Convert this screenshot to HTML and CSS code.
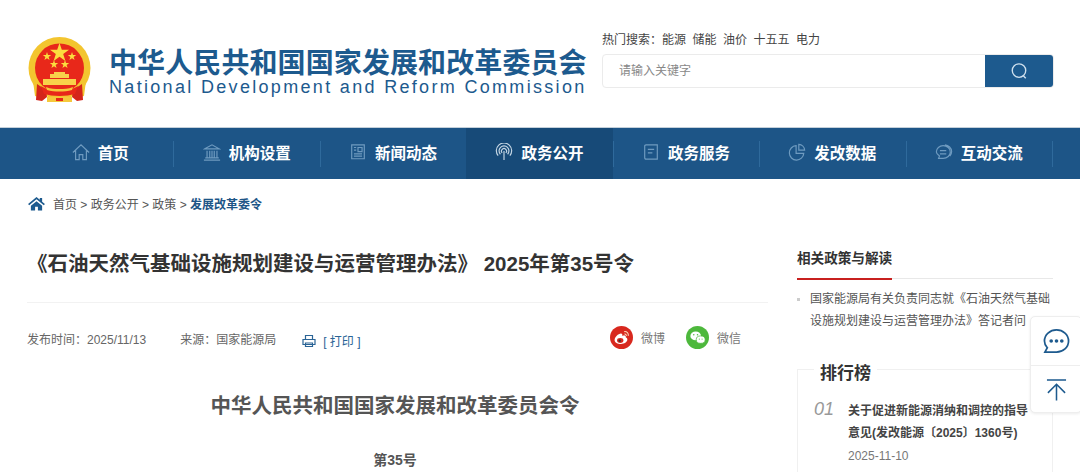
FILE: index.html
```html
<!DOCTYPE html>
<html lang="zh-CN">
<head>
    <meta charset="UTF-8">
    <title>石油天然气基础设施规划建设与运营管理办法</title>
    <link rel="stylesheet" href="styles.css">
</head>
<body>
    <header class="top">
        <div class="logo">
            <svg class="emblem" viewBox="0 0 64 68" width="64" height="68">
                <circle cx="32.500" cy="31" r="31" fill="#f3c52f"/>
                <path d="M6 44c5 10 15 15 26.500 15S54 54 59 44l-2 15-8 2-4-3H20l-4 3-8-2z" fill="#f3c52f"/>
                <circle cx="32.500" cy="31" r="24.500" fill="#e8281a"/>
                <polygon points="32.500,6 34.800,12.800 42,12.800 36.200,17 38.400,24 32.500,19.700 26.600,24 28.800,17 23,12.800 30.200,12.800" fill="#fbdc3e"/>
                <polygon points="20,15 21,18 24.200,18 21.600,20 22.600,23 20,21.200 17.400,23 18.400,20 15.800,18 19,18" fill="#fbdc3e"/>
                <polygon points="45,15 46,18 49.200,18 46.600,20 47.600,23 45,21.200 42.400,23 43.400,20 40.800,18 44,18" fill="#fbdc3e"/>
                <polygon points="27,23 28,26 31.200,26 28.600,28 29.600,31 27,29.200 24.400,31 25.400,28 22.800,26 26,26" fill="#fbdc3e"/>
                <polygon points="38,23 39,26 42.200,26 39.600,28 40.600,31 38,29.200 35.400,31 36.400,28 33.800,26 37,26" fill="#fbdc3e"/>
                <path d="M27 35h11v2H27zM23 37h19v4H23zM16 42h33v6H16z" fill="#f8d24a"/>
                <path d="M10 47l9 6 1 7-5 4-6-1zM55 47l-9 6-1 7 5 4 6-1z" fill="#d4251b"/>
                <path d="M14 49c6 4 11 4 18.500 4S45 53 51 49l-3 8c-5 1-9 2-15.500 2S22 58 17 57z" fill="#e8281a"/>
                <path d="M19 50c5 2 9 2 13.500 2s8.500 0 13.500-2l-1 3c-4 1-8 1.500-12.500 1.500S24 54 20 53zM20 60h25v5H20z" fill="#f5c93c"/>
                <path d="M29 61h7v3h-7z" fill="#e8281a"/>
            </svg>
            <div class="logo-text">
                <div class="logo-cn">中华人民共和国国家发展和改革委员会</div>
                <div class="logo-en">National Development and Reform Commission</div>
            </div>
        </div>
        <div class="search">
            <div class="hot">
                <span>热门搜索：</span><span class="hot-item">能源</span><span class="hot-item">储能</span><span class="hot-item">油价</span><span class="hot-item">十五五</span><span class="hot-item">电力</span>
            </div>
            <div class="search-box">
                <div class="search-input">请输入关键字</div>
                <div class="search-btn">
                    <svg viewBox="0 0 20 20" width="18" height="18" fill="none" stroke="#cfe0ee" stroke-width="1.500"><circle cx="10" cy="9.500" r="7.500"/><path d="M14.500 15l3 3"/></svg>
                </div>
            </div>
        </div>
    </header>

    <nav class="nav">
        <div class="nav-item">
            <svg class="nav-icon" viewBox="0 0 20 20"><path d="M1 10.500L10 2l9 8.500M4 8v10.500h4V13h4v5.500h4V8"/></svg>
            <span>首页</span>
        </div>
        <div class="nav-item">
            <svg class="nav-icon" viewBox="0 0 20 20"><path d="M2 6.500L10 2l8 4.500zM4.500 8.500v7.500M7.500 8.500v7.500M10 8.500v7.500M12.500 8.500v7.500M15.500 8.500v7.500M2.500 16.500h15M1 19h18"/></svg>
            <span>机构设置</span>
        </div>
        <div class="nav-item">
            <svg class="nav-icon" viewBox="0 0 20 20"><path d="M3 2h14v15.500H3zM10 5h4.500v4.500H10zM5.500 5H8M5.500 8H8M5.500 12h9M5.500 14.500h9"/></svg>
            <span>新闻动态</span>
        </div>
        <div class="nav-item active">
            <svg class="nav-icon light" viewBox="0 0 20 20"><path d="M3.500 14a8.500 8.500 0 1 1 13 0M6 12.500a5.500 5.500 0 1 1 8 0M8 11a2.800 2.800 0 1 1 4 0M10 9v10"/></svg>
            <span>政务公开</span>
        </div>
        <div class="nav-item">
            <svg class="nav-icon" viewBox="0 0 20 20"><path d="M4.500 2h12.500v16H4.500C3.500 18 3 17.500 3 16.500V3.500C3 2.500 3.500 2 4.500 2zM6.500 7h7M6.500 11h5"/></svg>
            <span>政务服务</span>
        </div>
        <div class="nav-item">
            <svg class="nav-icon" viewBox="0 0 20 20"><path d="M9 3a8 8 0 1 0 8.500 8.500H9zM12 1.500V8h6.500A7 7 0 0 0 12 1.500z"/></svg>
            <span>发改数据</span>
        </div>
        <div class="nav-item">
            <svg class="nav-icon" viewBox="0 0 20 20"><path d="M9 3c4.500 0 8 3 8 7s-3.500 7-8 7H4l1-2.500C3 13 1.500 11.500 1.500 10 1.500 6 5 3 9 3zM11 2c4 .5 7.500 3.500 7.500 7.500 0 2-.8 3.500-2 5M5.500 8.500h7M5.500 12h7"/></svg>
            <span>互动交流</span>
        </div>
    </nav>

    <div class="crumb">
        <svg viewBox="0 0 18 16" width="17" height="15"><path d="M9 1L0 8.500l1.200 1.300L9 3.500l7.800 6.300L18 8.500l-3-2.500V2h-2.500v2zM3 10.500V15.500h4.500v-4h3v4H15v-5L9 5.500z" fill="#1d5a8e"/></svg>
        <span class="crumb-links">首页 &gt; 政务公开 &gt; 政策 &gt; <b>发展改革委令</b></span>
    </div>

    <div class="page">
        <main class="article">
            <h1>《石油天然气基础设施规划建设与运营管理办法》 2025年第35号令</h1>
            <div class="meta">
                <span class="meta-date">发布时间：2025/11/13</span>
                <span class="meta-src">来源：国家能源局</span>
                <svg class="print-icon" viewBox="0 0 14 14" width="14" height="14" fill="none" stroke="#2a6496" stroke-width="1.200"><path d="M3.500 5V1.500h7V5M1 5.500h12v5H1zM3.500 9h7v3.500h-7z"/></svg>
                <span class="print">[ 打印 ]</span>
                <div class="share">
                    <span class="share-dot weibo">
                        <svg viewBox="0 0 16 16" width="17" height="17"><path d="M1.500 10.500c0-3 3.500-6 6-6.200 1.300 0 1.500 1 1.200 2.200 2-.8 3.600-.4 3.400 1.400 1 .4 1.400 1 1.400 1.900 0 2.300-3 4.200-6 4.200s-6-1.300-6-3.500z" fill="#fff"/><ellipse cx="6.800" cy="10.800" rx="3" ry="2.300" fill="#d8281e"/><circle cx="6.300" cy="11" r="1.100" fill="#333"/><path d="M10.500 2.500c2.500-.4 4.500 1.500 3.800 4M10.800 4.800c1.200-.2 2 .7 1.700 1.800" fill="none" stroke="#fbd9b8" stroke-width="1"/></svg>
                    </span>
                    <span>微博</span>
                    <span class="share-dot wechat">
                        <svg viewBox="0 0 16 16" width="17" height="17"><ellipse cx="6.300" cy="6.500" rx="5" ry="4.200" fill="#fff"/><ellipse cx="11" cy="10" rx="4.200" ry="3.500" fill="#fff" stroke="#4db83c" stroke-width=".7"/><circle cx="4.500" cy="5.500" r=".7" fill="#4db83c"/><circle cx="8" cy="5.500" r=".7" fill="#4db83c"/><circle cx="9.700" cy="9.500" r=".5" fill="#4db83c"/><circle cx="12.300" cy="9.500" r=".5" fill="#4db83c"/></svg>
                    </span>
                    <span>微信</span>
                </div>
            </div>
            <h2>中华人民共和国国家发展和改革委员会令</h2>
            <p class="order-no">第35号</p>
        </main>

        <aside class="side">
            <div class="side-head"><span>相关政策与解读</span></div>
            <div class="side-link">国家能源局有关负责同志就《石油天然气基础设施规划建设与运营管理办法》答记者问</div>
            <div class="rank">
                <div class="rank-title">排行榜</div>
                <div class="rank-row">
                    <span class="rank-no">01</span>
                    <div>
                        <div class="rank-name">关于促进新能源消纳和调控的指导意见(发改能源〔2025〕1360号)</div>
                        <div class="rank-date">2025-11-10</div>
                    </div>
                </div>
            </div>
        </aside>
    </div>

    <div class="float-tool">
        <div class="tool-btn">
            <svg viewBox="0 0 28 28" width="27" height="27" fill="none" stroke="#1d5a8e" stroke-width="1.800"><path d="M14 2c6.800 0 12.500 5 12.500 11.500S20.800 25 14 25H2l2.500-4.500C2.500 18.500 1.500 16 1.500 13.500 1.500 7 7.200 2 14 2z"/><circle cx="8.500" cy="13.500" r="1" fill="#1d5a8e"/><circle cx="14" cy="13.500" r="1" fill="#1d5a8e"/><circle cx="19.500" cy="13.500" r="1" fill="#1d5a8e"/></svg>
        </div>
        <div class="tool-btn">
            <svg viewBox="0 0 22 24" width="21" height="24" fill="none" stroke="#1d5a8e" stroke-width="1.600"><path d="M1 1.500h20M11 23V7M2 15l9-9 9 9"/></svg>
        </div>
    </div>
</body>
</html>
```

FILE: styles.css
```css
html, body {
    margin: 0;
    padding: 0;
    height: 472px;
    overflow: hidden;
    background: #fff;
    font-family: "Liberation Sans", "Noto Sans CJK SC", sans-serif;
    color: #333;
}

.top {
    height: 127px;
    padding: 0 27px;
    display: flex;
    justify-content: space-between;
    border-bottom: 1px solid #c4d0da;
    box-sizing: content-box;
}

.logo {
    display: flex;
    align-items: flex-start;
    padding-top: 37px;
}

.emblem {
    flex: none;
}

.logo-text {
    margin-left: 18px;
    margin-top: 12px;
    color: #1d5a8e;
}

.logo-cn {
    font-size: 28px;
    line-height: 29px;
    font-weight: bold;
    letter-spacing: 0.100px;
    white-space: nowrap;
}

.logo-en {
    font-size: 18px;
    line-height: 19px;
    letter-spacing: 2.320px;
    white-space: nowrap;
}

.search {
    width: 452px;
    padding-top: 32px;
    margin-right: -1px;
}

.hot {
    font-size: 12px;
    line-height: 17px;
    color: #444;
}

.hot-item {
    margin-right: 6.500px;
}

.search-box {
    margin-top: 5px;
    height: 34px;
    box-sizing: border-box;
    display: flex;
    border: 1px solid #ebebeb;
    border-radius: 4px;
    overflow: hidden;
}

.search-input {
    flex: 1;
    padding-left: 16px;
    font-size: 12px;
    line-height: 33px;
    color: #888;
}

.search-btn {
    width: 68px;
    background: #1d5a8e;
    display: flex;
    align-items: center;
    justify-content: center;
}

.nav {
    height: 51px;
    padding: 0 27px;
    background: #1d5587;
    display: grid;
    grid-template-columns: repeat(7, 146.43px);
}

.nav-item {
    display: flex;
    align-items: center;
    justify-content: center;
    gap: 8px;
    padding-bottom: 3px;
    font-size: 15.500px;
    font-weight: bold;
    color: #fff;
    position: relative;
}

.nav-item::after {
    content: "";
    position: absolute;
    right: -1px;
    top: 13px;
    height: 26px;
    width: 1px;
    background: #2f6a9c;
}

.nav-item.active {
    background: #174a78;
}

.nav-icon {
    width: 18px;
    height: 18px;
    fill: none;
    stroke: #6f9bc0;
    stroke-width: 1.300;
}

.nav-icon.light {
    stroke: #c5d6e4;
}

.crumb {
    height: 50px;
    padding-left: 28px;
    padding-bottom: 2px;
    box-sizing: border-box;
    display: flex;
    align-items: center;
    gap: 8px;
    font-size: 12px;
    color: #555;
}

.crumb b {
    color: #1d5587;
}

.page {
    display: flex;
    padding-left: 27px;
}

.article {
    width: 741px;
    flex: none;
}

h1 {
    margin: 20px 0 0;
    padding-bottom: 23px;
    font-size: 20.500px;
    line-height: 30px;
    font-weight: bold;
    color: #333;
    border-bottom: 1px solid #f2f2f2;
    white-space: nowrap;
}

.meta {
    display: flex;
    align-items: center;
    height: 36px;
    margin-top: 17px;
    font-size: 12px;
    color: #666;
}

.meta-src {
    margin-left: 34px;
}

.print-icon {
    margin-left: 26px;
    margin-top: 6px;
}

.print {
    margin-left: 7px;
    margin-top: 4px;
    color: #2a6496;
}

.share {
    margin-left: auto;
    margin-right: 27px;
    margin-top: -2px;
    display: flex;
    align-items: center;
    color: #777;
}

.share-dot {
    width: 23px;
    height: 23px;
    border-radius: 50%;
    display: flex;
    align-items: center;
    justify-content: center;
    margin-right: 8px;
}

.share-dot.weibo {
    background: #d8281e;
}

.share-dot.wechat {
    background: #4db83c;
    margin-left: 21px;
}

h2 {
    margin: 35px 0 0;
    padding-right: 5px;
    text-align: center;
    font-size: 20.500px;
    line-height: 30px;
    font-weight: bold;
    color: #555;
}

.order-no {
    margin: 29px 0 0;
    padding-right: 5px;
    text-align: center;
    font-size: 14px;
    line-height: 20px;
    font-weight: bold;
    color: #555;
}

.side {
    width: 256px;
    margin-left: 29px;
    flex: none;
    padding-top: 18px;
}

.side-head {
    height: 31px;
    border-bottom: 1px solid #e8e8e8;
    font-size: 13.600px;
    font-weight: bold;
    line-height: 24px;
    color: #333;
}

.side-head span {
    display: inline-block;
    height: 31px;
    border-bottom: 2px solid #c8201f;
}

.side-link {
    margin-top: 9px;
    padding-left: 13px;
    font-size: 12px;
    line-height: 22px;
    color: #555;
    position: relative;
}

.side-link::before {
    content: "";
    position: absolute;
    left: 0;
    top: 10px;
    width: 3px;
    height: 3px;
    background: #ccc;
}

.rank {
    margin-top: 37px;
    border: 1px solid #f0f0f0;
    padding: 0 16px;
    height: 200px;
}

.rank-title {
    display: inline-block;
    margin-top: -13px;
    padding: 0 6px;
    background: #fff;
    font-size: 17px;
    line-height: 24px;
    font-weight: bold;
    color: #333;
    transform: translateY(-5px);
}

.rank-row {
    display: flex;
    margin-top: 9px;
}

.rank-no {
    width: 34px;
    flex: none;
    font-size: 18px;
    line-height: 18px;
    font-style: italic;
    color: #999;
}

.rank-name {
    font-size: 12px;
    line-height: 22px;
    font-weight: bold;
    color: #444;
}

.rank-date {
    margin-top: 5px;
    font-size: 12px;
    color: #777;
}

.float-tool {
    position: absolute;
    left: 1030px;
    top: 316px;
    width: 52px;
    height: 97px;
    background: #fff;
    border: 1px solid #eee;
    border-radius: 5px;
    box-sizing: border-box;
    box-shadow: 0 1px 3px rgba(0, 0, 0, 0.08);
}

.tool-btn {
    height: 48px;
    display: flex;
    align-items: center;
    justify-content: center;
}

.tool-btn + .tool-btn {
    border-top: 1px solid #eee;
}
```
